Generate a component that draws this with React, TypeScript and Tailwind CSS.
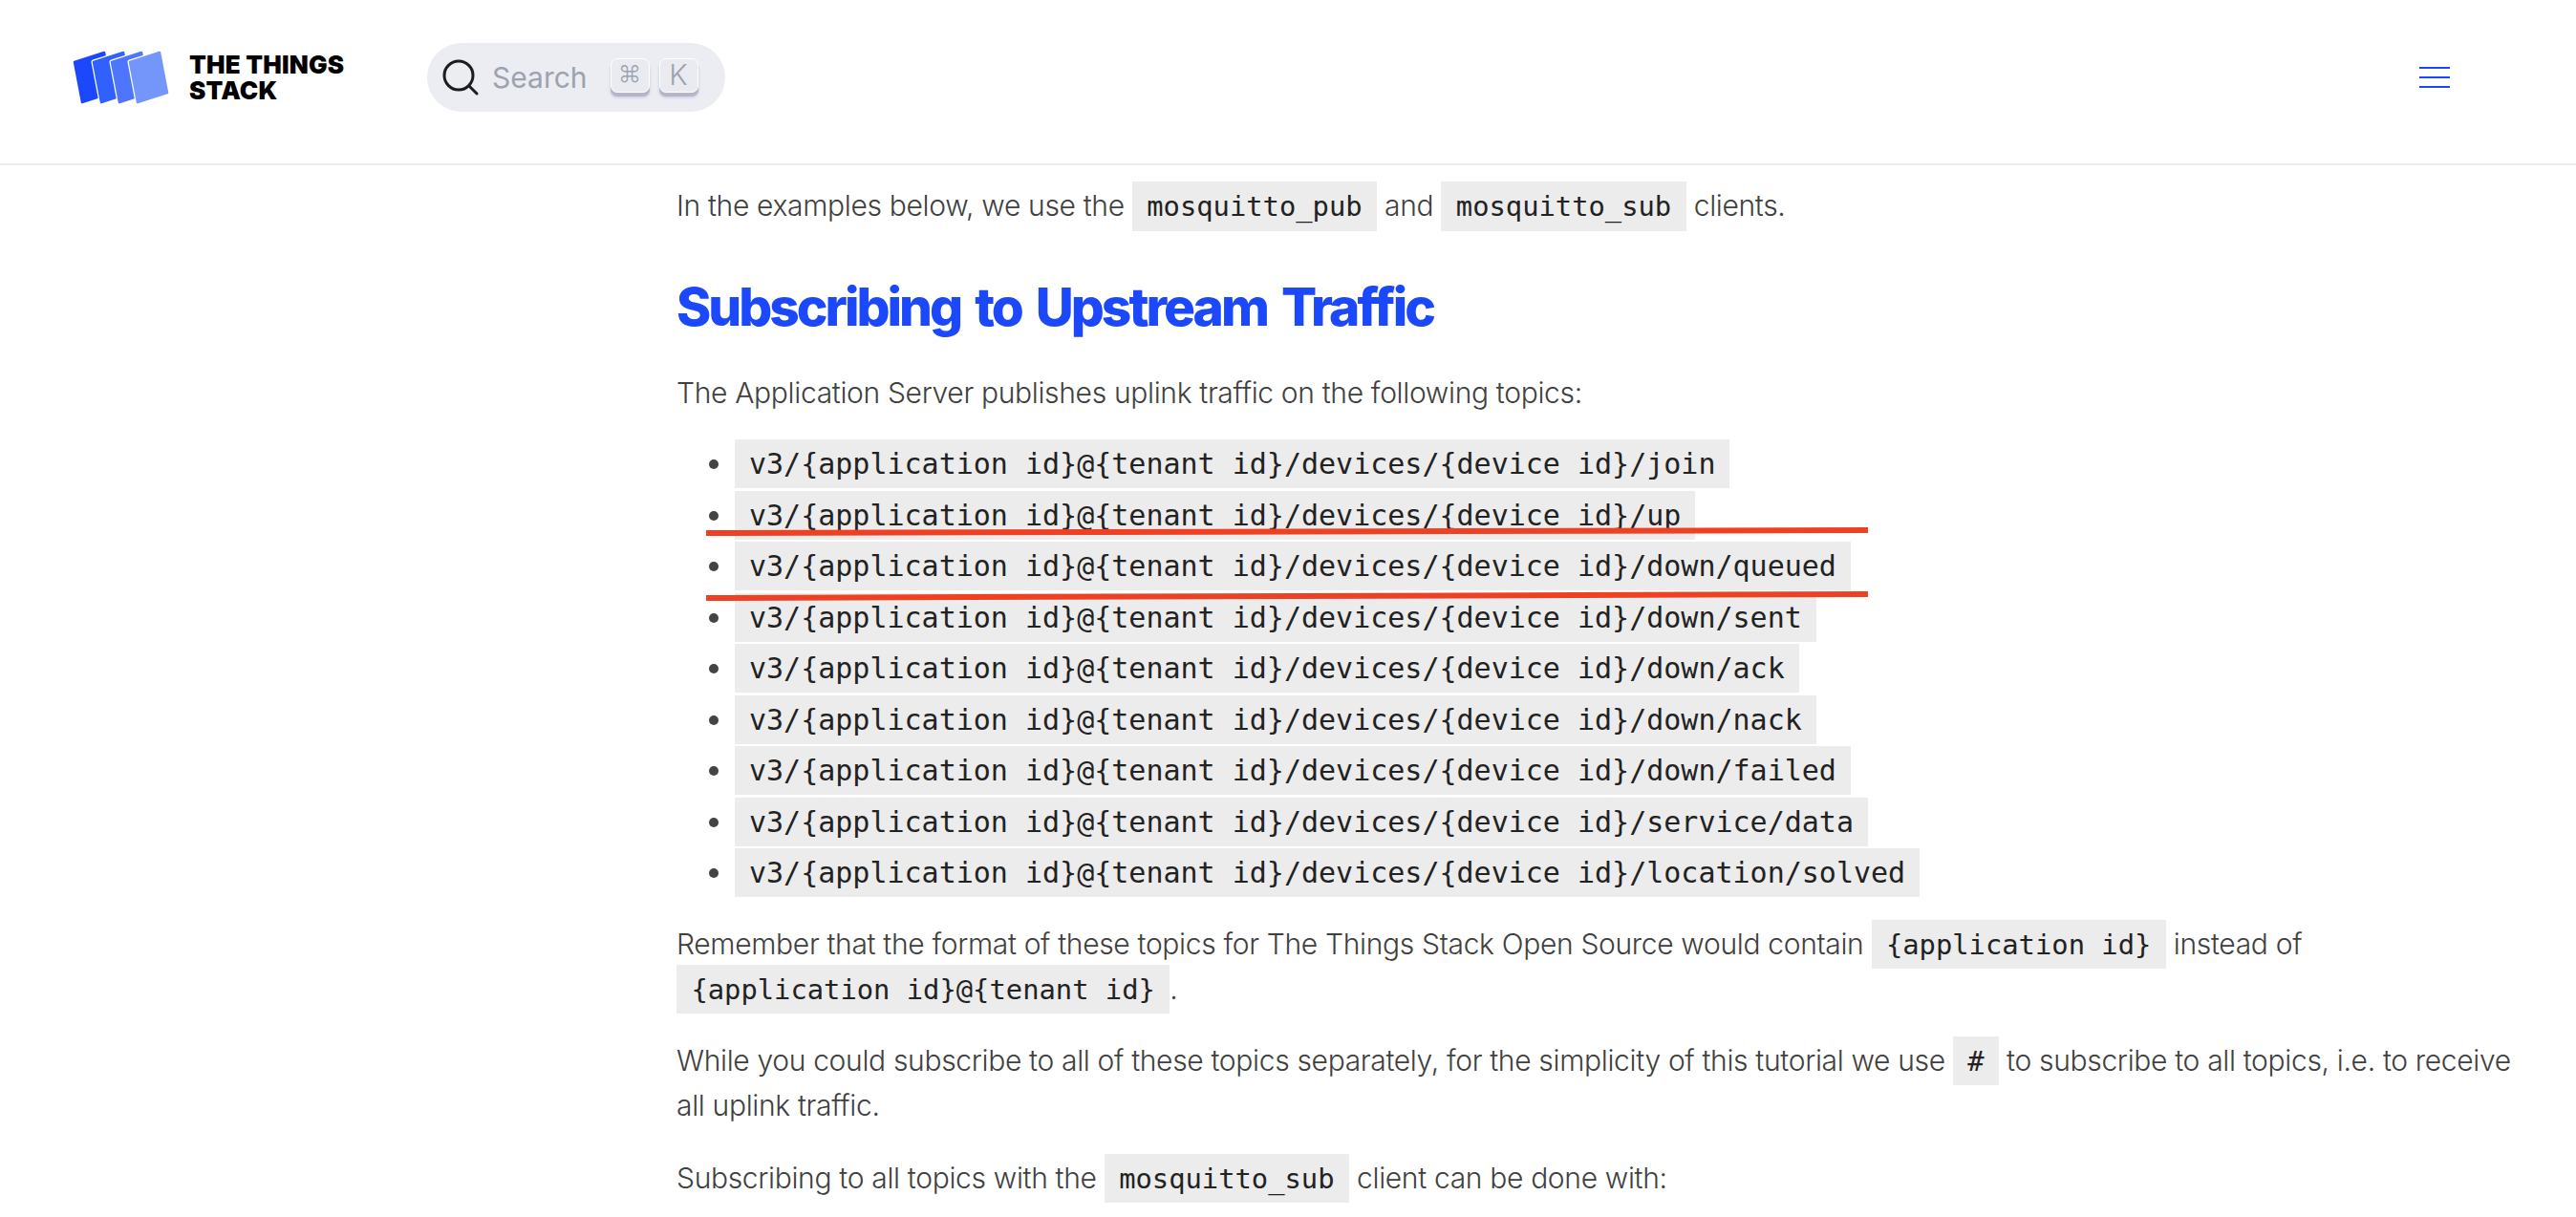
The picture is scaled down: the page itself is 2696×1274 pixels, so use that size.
import React from "react";

function Code({ children }: { children: React.ReactNode }) {
  return (
    <code className="whitespace-nowrap bg-[#ececec] px-[15.4px] py-[8.7px] font-['DejaVu_Sans_Mono',monospace] text-[28.8px] font-normal tracking-normal text-[#222222]">
      {children}
    </code>
  );
}

function ListCode({ children }: { children: React.ReactNode }) {
  return (
    <code className="whitespace-nowrap bg-[#ececec] px-[15px] py-[8px] font-['DejaVu_Sans_Mono',monospace] text-[30px] font-normal tracking-normal text-[#222222]">
      {children}
    </code>
  );
}

const base = "v3/{application id}@{tenant id}/devices/{device id}/";
const topics = ["join", "up", "down/queued", "down/sent", "down/ack", "down/nack", "down/failed", "service/data", "location/solved"];

const cards = [
  { x: 0, c: "#1c48fb" },
  { x: 20, c: "#3161fd" },
  { x: 39, c: "#4e75fd" },
  { x: 58, c: "#7496fb" },
];

function Logo() {
  return (
    <svg width="104" height="56" viewBox="0 0 104 56" className="shrink-0">
      {cards.map((k) => {
        const pts = [
          [2 + k.x, 12],
          [33 + k.x, 2],
          [41 + k.x, 44],
          [10 + k.x, 54],
        ]
          .map((p) => p.join(","))
          .join(" ");
        return (
          <g key={k.x} strokeLinejoin="round">
            <polygon points={pts} fill="#fff" stroke="#fff" strokeWidth={5} />
            <polygon points={pts} fill={k.c} stroke={k.c} strokeWidth={2.5} />
          </g>
        );
      })}
    </svg>
  );
}

function Key({ children, className }: { children: React.ReactNode; className: string }) {
  return (
    <span className={`flex h-[36px] w-[41px] items-start justify-center rounded-[7px] border border-white bg-[#e9ebf0] font-['Inter'] leading-[32px] text-[#9ca3af] shadow-[0_4px_0_#b6b5d0,0_5px_3px_rgba(130,130,170,0.35)] ${className}`}>
      {children}
    </span>
  );
}

export default function App() {
  return (
    <div className="relative h-[1274px] w-[2696px] overflow-hidden bg-white font-['Inter',sans-serif] text-[30px] font-light leading-[46px] tracking-[-0.33px] text-[#404040]">
      <header className="flex h-[173px] items-center border-b-2 border-[#e8edf2] pb-[10px] pl-[76px] tracking-normal">
        <Logo />
        <div className="ml-[18px] w-[168px] font-['Inter'] text-[26px] font-black leading-[27px] tracking-[0.2px] text-black">
          THE THINGS
          <br />
          STACK
        </div>
        <div className="ml-[81px] flex h-[72px] w-[312px] items-center rounded-full bg-[#ebedf2] pl-[16px]">
          <svg width="38" height="38" viewBox="0 0 38 38" fill="none" stroke="#1c1c1c" strokeWidth="3" strokeLinecap="round" className="shrink-0">
            <circle cx="17" cy="17" r="15" />
            <path d="M28 28 L36 36" />
          </svg>
          <span className="ml-[14px] text-[30px] font-normal leading-none text-[#9ca3af]">Search</span>
          <div className="ml-[24px] flex gap-[10px] pb-[4px]">
            <Key className="text-[24px]">⌘</Key>
            <Key className="text-[30px] font-light">K</Key>
          </div>
        </div>
        <div className="ml-auto mr-[132px] flex w-[32px] flex-col gap-[8px]">
          <div className="h-[2px] bg-[#1c48fb]" />
          <div className="h-[2px] bg-[#1c48fb]" />
          <div className="h-[2px] bg-[#1c48fb]" />
        </div>
      </header>

      <main className="ml-[708px] w-[1930px]">
        <p className="mt-[19px]">
          In the examples below, we use the <Code>mosquitto_pub</Code> and <Code>mosquitto_sub</Code> clients.
        </p>
        <h2 className="mt-[50px] font-['Inter'] text-[55px] font-extrabold leading-[64px] tracking-[-3px] text-[#1c48fb] [word-spacing:6px]">
          Subscribing to Upstream Traffic
        </h2>
        <p className="mt-[35px]">The Application Server publishes uplink traffic on the following topics:</p>
        <ul className="mt-[24px] list-disc pl-[61px]">
          {topics.map((t) => (
            <li key={t} className="h-[53.5px] leading-[53.5px] marker:text-[31px] marker:text-[#444444]">
              <ListCode>
                {base}
                {t}
              </ListCode>
            </li>
          ))}
        </ul>
        <p className="mt-[25px]">
          Remember that the format of these topics for The Things Stack Open Source would contain <Code>{"{application id}"}</Code> instead of <Code>{"{application id}@{tenant id}"}</Code>.
        </p>
        <p className="mt-[28px]">
          While you could subscribe to all of these topics separately, for the simplicity of this tutorial we use <Code>#</Code> to subscribe to all topics, i.e. to receive all uplink traffic.
        </p>
        <p className="mt-[30px]">
          Subscribing to all topics with the <Code>mosquitto_sub</Code> client can be done with:
        </p>
      </main>

      <svg width="1230" height="90" viewBox="0 0 1230 90" className="pointer-events-none absolute left-[738px] top-[548px]">
        <path d="M1 10 L1217 7" stroke="#ee4023" strokeWidth="6" fill="none" />
        <path d="M1 78 L1217 74" stroke="#ee4023" strokeWidth="6" fill="none" />
      </svg>
    </div>
  );
}
